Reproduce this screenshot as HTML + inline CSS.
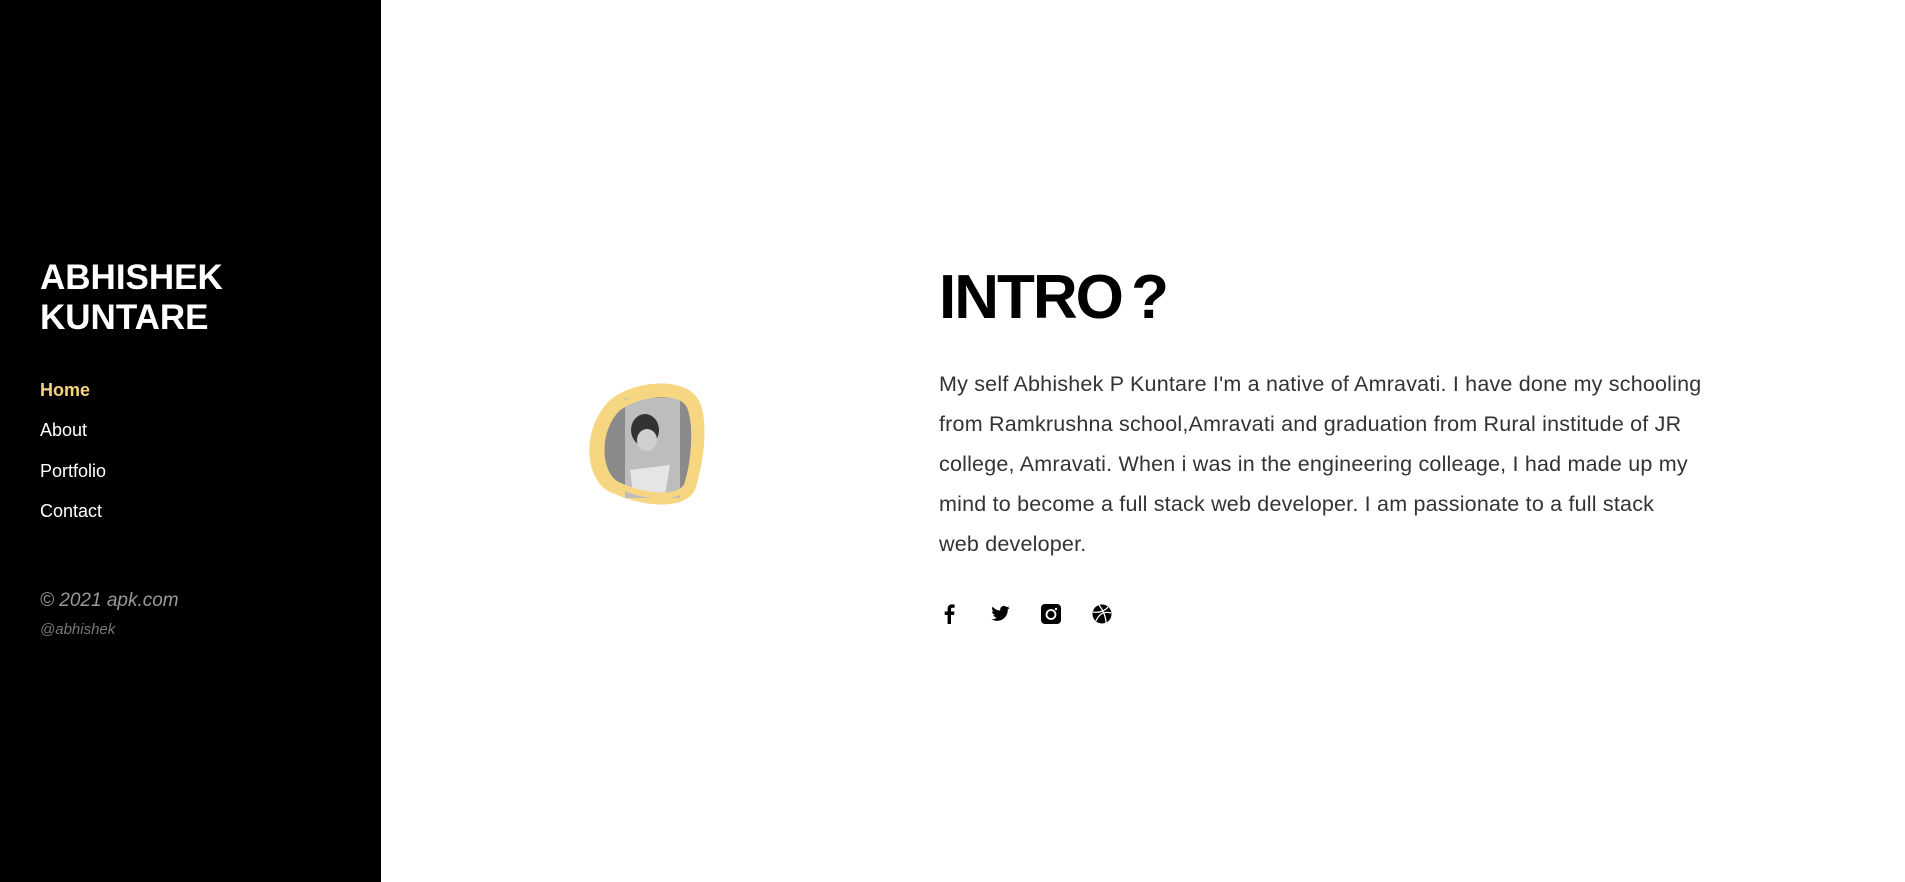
<!DOCTYPE html>
<html><head><meta charset="utf-8"><style>
*{margin:0;padding:0;box-sizing:border-box}
body{width:1905px;height:882px;overflow:hidden;background:#fff;font-family:"Liberation Sans",sans-serif;position:relative}
.side{position:absolute;left:0;top:0;width:381px;height:882px;background:#000}
.name{position:absolute;left:40px;top:258px;color:#fff;font-weight:900;font-size:35px;line-height:40px;letter-spacing:0px}
.nav a{position:absolute;left:40px;font-size:18px;color:#fff;text-decoration:none}
.copy{position:absolute;left:40px;top:590px;color:#999;font-style:italic;font-size:19px}
.at{position:absolute;left:40px;top:621px;color:#777;font-style:italic;font-size:15px}
h1{position:absolute;left:939px;top:262px;font-size:62px;font-weight:900;color:#000;letter-spacing:-2px;word-spacing:-6px}
p{position:absolute;left:939px;top:364px;width:790px;font-size:21.5px;line-height:40px;color:#333;letter-spacing:0.2px}
.ic{position:absolute;top:604px}
</style></head><body>
<div class="side">
<div class="name">ABHISHEK<br>KUNTARE</div>
<div class="nav">
<a style="top:380px;color:#f6d37e;font-weight:bold">Home</a>
<a style="top:420px">About</a>
<a style="top:461px">Portfolio</a>
<a style="top:501px">Contact</a>
</div>
<div class="copy">© 2021 apk.com</div>
<div class="at">@abhishek</div>
</div>
<svg style="position:absolute;left:585px;top:380px" width="135" height="132" viewBox="0 0 135 132">
<path d="M25 20 C50 0 95 -2 110 15 C125 30 120 80 110 110 C100 130 60 128 25 112 C0 100 -5 50 25 20Z" fill="#f7d682"/>
<path d="M33 28 C55 12 90 10 102 22 C113 35 110 80 102 105 C95 120 60 118 33 105 C12 95 10 50 33 28Z" fill="#8a8a8a"/>
<rect x="40" y="18" width="55" height="100" fill="#bdbdbd"/>
<ellipse cx="60" cy="50" rx="14" ry="16" fill="#333"/>
<ellipse cx="62" cy="60" rx="10" ry="11" fill="#d0d0d0"/>
<path d="M45 90 L85 85 L80 115 L48 112Z" fill="#e5e5e5"/>
<path d="M33 28 C55 12 90 10 102 22 C113 35 110 80 102 105 C95 120 60 118 33 105 C12 95 10 50 33 28Z" fill="none" stroke="#f7d682" stroke-width="6"/>
</svg>
<h1>INTRO ?</h1>
<p>My self Abhishek P Kuntare I'm a native of Amravati. I have done my schooling<br>from Ramkrushna school,Amravati and graduation from Rural institude of JR<br>college, Amravati. When i was in the engineering colleage, I had made up my<br>mind to become a full stack web developer. I am passionate to a full stack<br>web developer.</p>
<svg class="ic" style="left:940px" width="20" height="20" viewBox="0 0 20 20"><path d="M11 20V11h3l.5-3.5H11V5.5c0-1 .3-1.7 1.7-1.7H14.6V.6C14.3.5 13.2.4 12 .4 9.4.4 7.6 2 7.6 4.9v2.6H4.7V11h2.9v9z" fill="#000"/></svg>
<svg class="ic" style="left:990px" width="21" height="20" viewBox="0 0 24 24"><path d="M23 4.5a9 9 0 0 1-2.6.7 4.6 4.6 0 0 0 2-2.5 9 9 0 0 1-2.9 1.1 4.5 4.5 0 0 0-7.7 4.1A12.8 12.8 0 0 1 2.5 3.2a4.5 4.5 0 0 0 1.4 6 4.4 4.4 0 0 1-2-.6v.1a4.5 4.5 0 0 0 3.6 4.4 4.5 4.5 0 0 1-2 .1 4.5 4.5 0 0 0 4.2 3.1A9 9 0 0 1 1 18.2a12.8 12.8 0 0 0 6.9 2c8.3 0 12.8-6.9 12.8-12.8v-.6A9 9 0 0 0 23 4.5z" fill="#000"/></svg>
<svg class="ic" style="left:1041px" width="20" height="20" viewBox="0 0 20 20"><rect x="0" y="0" width="20" height="20" rx="4" fill="#000"/><circle cx="10" cy="10.5" r="4.5" fill="none" stroke="#fff" stroke-width="1.8"/><circle cx="15" cy="5" r="1.2" fill="#fff"/></svg>
<svg class="ic" style="left:1092px" width="20" height="20" viewBox="0 0 20 20"><circle cx="10" cy="10" r="9.5" fill="#000"/><path d="M1 8c6 1 12-1 15-5M4 17c3-7 8-10 15-8M7 1c4 5 7 12 7 18" stroke="#fff" stroke-width="1.3" fill="none"/></svg>
</body></html>
